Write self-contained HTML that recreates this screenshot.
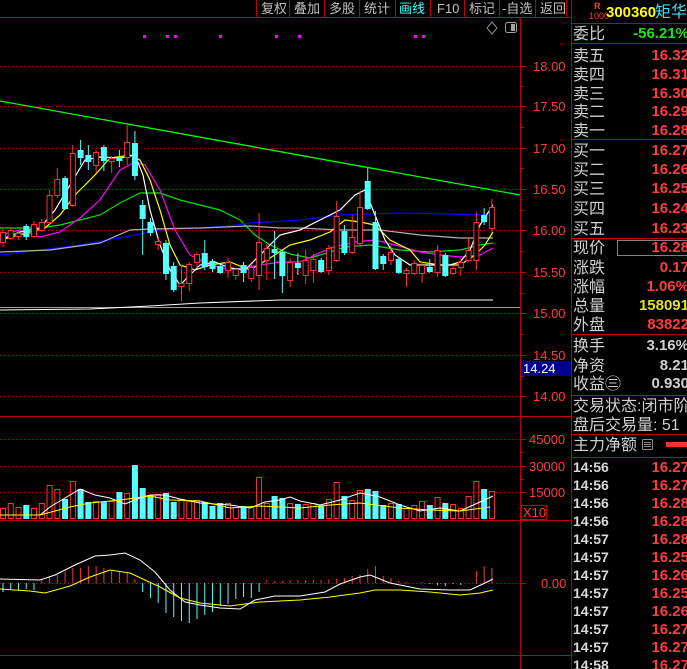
<!DOCTYPE html>
<html><head><meta charset="utf-8">
<style>
html,body{margin:0;padding:0;background:#000;width:687px;height:669px;overflow:hidden}
svg{display:block}
text{font-family:"Liberation Sans","Noto Sans CJK SC",sans-serif}
.lb{fill:#d0d0d0;font-size:16px}
.rv{fill:#ff3c3c;font-size:15px;font-weight:bold;text-anchor:end}
.ax{fill:#ff3c3c;font-size:13px}
.tb{fill:#c0c0c0;font-size:13px}
.tm{fill:#d8d8d8;font-size:14px;font-weight:bold}
</style></head><body>
<svg id="s" width="687" height="669" viewBox="0 0 687 669" xmlns="http://www.w3.org/2000/svg">
<rect width="687" height="669" fill="#000"/>
<g id="grid" stroke="#c00000" stroke-width="1" stroke-dasharray="1,3"></g>
<line x1="0" y1="17.5" x2="571" y2="17.5" stroke="#c00000"/>
<g stroke="#c00000">
<line x1="256.5" y1="0" x2="256.5" y2="17"/><line x1="289.5" y1="0" x2="289.5" y2="17"/><line x1="324.5" y1="0" x2="324.5" y2="17"/><line x1="359.5" y1="0" x2="359.5" y2="17"/><line x1="395.5" y1="0" x2="395.5" y2="17"/><line x1="430.5" y1="0" x2="430.5" y2="17"/><line x1="464.5" y1="0" x2="464.5" y2="17"/><line x1="499.5" y1="0" x2="499.5" y2="17"/><line x1="535.5" y1="0" x2="535.5" y2="17"/><line x1="566.5" y1="0" x2="566.5" y2="17"/>
</g>
<text class="tb" x="261" y="13">复权</text><text class="tb" x="294" y="13">叠加</text><text class="tb" x="329" y="13">多股</text><text class="tb" x="364" y="13">统计</text><text x="399" y="13" style="fill:#40ffff;font-size:13px">画线</text><text class="tb" x="437" y="13">F10</text><text class="tb" x="469" y="13">标记</text><text class="tb" x="502" y="13">-自选</text><text class="tb" x="540" y="13">返回</text>
<path d="M492 22 L497 28 L492 34 L487 28 Z" fill="none" stroke="#909090"/>
<rect x="505.5" y="22.5" width="11" height="10" rx="2" fill="none" stroke="#a0a0a0"/><rect x="511" y="24" width="4" height="7" fill="#a0a0a0"/>
<g fill="#ff00ff"><rect x="143" y="35" width="3" height="3"/><rect x="166" y="35" width="3" height="3"/><rect x="174" y="35" width="3" height="3"/><rect x="219" y="35" width="3" height="3"/><rect x="275" y="35" width="3" height="3"/><rect x="298" y="35" width="3" height="3"/><rect x="414" y="35" width="3" height="3"/><rect x="422" y="35" width="3" height="3"/></g>
<line x1="520.5" y1="17" x2="520.5" y2="669" stroke="#c00000"/>
<line x1="571.5" y1="0" x2="571.5" y2="669" stroke="#c00000"/>
<line x1="0" y1="416.5" x2="571" y2="416.5" stroke="#c00000"/>
<line x1="0" y1="520.5" x2="571" y2="520.5" stroke="#c00000"/>
<line x1="0" y1="655.5" x2="571" y2="655.5" stroke="#c00000"/>
<g id="ticks" stroke="#c00000"></g>
<text class="ax" x="533" y="71">18.00</text><text class="ax" x="533" y="111">17.50</text><text class="ax" x="533" y="153">17.00</text><text class="ax" x="533" y="194">16.50</text><text class="ax" x="533" y="235">16.00</text><text class="ax" x="533" y="277">15.50</text><text class="ax" x="533" y="318">15.00</text><text class="ax" x="533" y="360">14.50</text><text class="ax" x="533" y="401">14.00</text>
<rect x="521" y="361" width="50" height="15" fill="#000090"/><text x="523" y="373" style="fill:#fff;font-size:13px">14.24</text>
<text class="ax" x="529" y="444">45000</text><text class="ax" x="529" y="471">30000</text><text class="ax" x="529" y="497">15000</text>
<rect x="521.5" y="505.5" width="25" height="14" fill="none" stroke="#c00000"/><text class="ax" x="523" y="517">X10</text>
<text class="ax" x="541" y="588">0.00</text>
<line x1="0" y1="101" x2="520" y2="195" stroke="#00ff00" stroke-width="1.3"/>
<line x1="0" y1="307.5" x2="520" y2="307.5" stroke="#a0a0a0"/>
<polyline fill="none" stroke="#fff" points="0,310 90,309 150,306 200,303 280,300 360,300 493,300"/>
<g id="ma" fill="none" stroke-width="1.2"></g>
<g id="cd"></g>
<g id="vol"></g>
<g id="macd"></g>
<g stroke="#c00000"><line x1="572" y1="23.5" x2="687" y2="23.5"/><line x1="572" y1="43.5" x2="687" y2="43.5"/><line x1="572" y1="139.5" x2="687" y2="139.5"/><line x1="572" y1="238.5" x2="687" y2="238.5"/><line x1="572" y1="334.5" x2="687" y2="334.5"/><line x1="572" y1="395.5" x2="687" y2="395.5"/><line x1="572" y1="434.5" x2="687" y2="434.5"/><line x1="572" y1="457.5" x2="687" y2="457.5"/></g>
<text x="594" y="9" style="fill:#ff3c3c;font-size:9px;font-weight:bold">R</text><text x="589" y="19" style="fill:#ff3c3c;font-size:9px">1000</text>
<text x="606" y="17" style="fill:#ffff00;font-size:15px;font-weight:bold">300360</text><text x="655" y="17" style="fill:#40e0ff;font-size:16px">矩华</text>
<text class="lb" x="573" y="39">委比</text><text class="rv" x="689" y="38" style="fill:#20e020">-56.21%</text>
<text class="lb" x="573" y="61">卖五</text><text class="rv" x="689" y="60">16.32</text>
<text class="lb" x="573" y="80">卖四</text><text class="rv" x="689" y="79">16.31</text>
<text class="lb" x="573" y="99">卖三</text><text class="rv" x="689" y="98">16.30</text>
<text class="lb" x="573" y="117">卖二</text><text class="rv" x="689" y="116">16.29</text>
<text class="lb" x="573" y="136">卖一</text><text class="rv" x="689" y="135">16.28</text>
<text class="lb" x="573" y="156">买一</text><text class="rv" x="689" y="155">16.27</text>
<text class="lb" x="573" y="175">买二</text><text class="rv" x="689" y="174">16.26</text>
<text class="lb" x="573" y="194">买三</text><text class="rv" x="689" y="193">16.25</text>
<text class="lb" x="573" y="214">买四</text><text class="rv" x="689" y="213">16.24</text>
<text class="lb" x="573" y="234">买五</text><text class="rv" x="689" y="233">16.23</text>
<rect x="617.5" y="240.5" width="72" height="15" fill="none" stroke="#808080"/>
<text class="lb" x="573" y="253">现价</text><text class="rv" x="689" y="252">16.28</text>
<text class="lb" x="573" y="273">涨跌</text><text class="rv" x="689" y="272">0.17</text>
<text class="lb" x="573" y="292">涨幅</text><text class="rv" x="689" y="291">1.06%</text>
<text class="lb" x="573" y="311">总量</text><text class="rv" x="689" y="310" style="fill:#e0e020">158091</text>
<text class="lb" x="573" y="330">外盘</text><text class="rv" x="689" y="329">83822</text>
<text class="lb" x="573" y="351">换手</text><text class="rv" x="689" y="350" style="fill:#d0d0d0">3.16%</text>
<text class="lb" x="573" y="371">净资</text><text class="rv" x="689" y="370" style="fill:#d0d0d0">8.21</text>
<text class="lb" x="573" y="389">收益㊂</text><text class="rv" x="689" y="388" style="fill:#d0d0d0">0.930</text>
<text class="lb" x="573" y="411">交易状态:闭市阶</text>
<text class="lb" x="573" y="430">盘后交易量: 51 </text>
<text class="lb" x="573" y="450">主力净额</text>
<rect x="642.5" y="439.5" width="10" height="10" rx="1" fill="none" stroke="#909090"/><g stroke="#909090"><line x1="644" y1="442.5" x2="651" y2="442.5"/><line x1="644" y1="444.5" x2="651" y2="444.5"/><line x1="644" y1="446.5" x2="651" y2="446.5"/></g>
<rect x="666" y="442" width="21" height="5" fill="#ff3030"/>
<g id="tl"></g>
</svg>
<script>
var NS="http://www.w3.org/2000/svg";
function el(p,t,a){var e=document.createElementNS(NS,t);for(var k in a)e.setAttribute(k,a[k]);p.appendChild(e);return e;}
var g=document.getElementById('grid');
[66,106,148,189,230,272,313,355,396,439,466,492].forEach(function(y){el(g,'line',{x1:0,y1:y+.5,x2:520,y2:y+.5});});
el(g,'line',{x1:0,y1:583.5,x2:520,y2:583.5});
var tk=document.getElementById('ticks');
[66,106,148,189,230,272,313,355,396,439,466,492,583].forEach(function(y){el(tk,'line',{x1:520,y1:y+.5,x2:526,y2:y+.5});});
[86,127,168,210,251,293,334,376,452,479].forEach(function(y){el(tk,'line',{x1:520,y1:y+.5,x2:524,y2:y+.5});});
function pl(pts,c){el(document.getElementById('ma'),'polyline',{points:pts,stroke:c});}
pl("0,228 40,228 60,225 80,220 100,215 120,203 140,193 160,193 180,200 200,205 220,210 240,220 255,235 270,245 290,254 310,258 330,252 345,247 370,245 400,250 430,252 460,250 480,245 493,243","#00e000");
pl("0,255 40,250 80,245 120,238 145,233 160,230 200,228 230,226 250,223 270,222 300,220 340,215 400,213 450,214 493,215","#0000ff");
pl("0,252 50,250 100,243 130,230 150,229 200,228 250,226 280,228 300,228 340,230 380,230 420,235 460,238 493,238","#b0b0b0");
pl("0,235 20,230 40,237 60,232 80,218 100,200 120,170 135,162 145,165 160,190 175,230 190,255 210,265 230,270 260,265 280,262 300,262 330,248 355,242 375,240 395,245 420,252 440,255 460,257 480,255 493,248","#ff00ff");
pl("0,240 30,232 45,228 60,215 75,195 95,175 110,158 130,155 140,160 150,180 160,210 170,245 180,265 195,270 210,265 230,262 250,270 270,258 290,245 310,240 330,232 345,220 360,222 375,225 390,240 410,250 420,262 440,265 460,265 475,255 485,245 493,232","#ffff00");
pl("0,240 20,232 40,228 55,210 70,185 85,160 100,157 120,158 135,155 143,175 150,210 160,245 170,270 180,285 190,275 200,265 215,262 230,268 245,270 260,255 280,235 300,230 320,220 340,210 355,195 365,190 375,215 385,240 395,255 410,265 430,265 450,265 460,262 470,250 480,225 493,205","#ffffff");
var C=[[242,232,229,247],[238,230,228,240],[236,233,231,240],[226,236,224,240],[236,224,221,238],[230,222,219,232],[222,195,190,224],[195,179,168,198],[178,208,176,210],[205,153,145,207],[150,157,140,165],[155,161,145,170],[165,152,150,173],[147,160,145,171],[161,158,156,173],[157,160,150,167],[157,142,125,165],[143,175,131,180],[205,218,200,255],[222,232,218,236],[244,241,238,250],[243,273,240,280],[266,289,262,292],[286,283,265,301],[283,264,262,291],[262,254,252,268],[253,266,240,270],[261,268,259,272],[266,272,264,274],[270,262,258,278],[275,269,268,280],[265,272,262,282],[278,267,264,282],[275,242,213,290],[260,248,243,280],[249,252,231,279],[252,275,250,293],[280,262,258,287],[263,267,253,275],[275,260,249,284],[270,259,254,283],[260,271,258,273],[270,248,245,275],[260,216,201,262],[231,252,225,255],[252,237,215,254],[243,207,191,245],[181,208,168,210],[222,268,211,270],[256,263,254,270],[260,252,245,265],[259,272,257,274],[273,270,268,287],[273,263,260,275],[273,265,262,283],[267,271,259,273],[272,250,245,277],[255,275,253,277],[273,268,266,275],[267,262,258,276],[260,250,237,262],[260,222,212,270],[215,221,208,225],[228,207,199,233]];
var cd=document.getElementById('cd');
var V=[508,503,507,505,508,503,485,489,499,481,489,502,501,502,501,492,493,465,488,495,494,493,502,499,501,500,502,506,503,503,507,506,507,477,503,496,498,503,504,504,503,506,499,482,496,500,490,489,491,505,503,504,508,505,501,505,497,503,504,508,496,481,489,491];
var vg=document.getElementById('vol');
var M=[592,590,590,589,590,580,576,575,572,568,568,566,566,568,571,572,573,579,592,598,603,613,617,621,623,619,615,612,606,604,599,597,598,592,580,581,581,580,580,580,580,580,579,579,578,576,575,569,566,576,578,581,582,583,582,584,585,586,584,585,583,571,566,568];
var mg=document.getElementById('macd');
C.forEach(function(c,i){
 var x=3+i*7.76, up=c[1]<c[0], col=up?'#ff3333':'#54ffff';
 var top=Math.min(c[0],c[1]), h=Math.max(1,Math.abs(c[0]-c[1]));
 el(cd,'line',{x1:x,y1:c[2],x2:x,y2:c[3],stroke:col});
 if(up) el(cd,'rect',{x:x-2.5,y:top+.5,width:5,height:h,fill:'#000',stroke:col});
 else el(cd,'rect',{x:x-3,y:top,width:6,height:h+1,fill:col});
 var vt=V[i];
 if(up) el(vg,'rect',{x:x-2.5,y:vt+.5,width:5,height:518-vt,fill:'none',stroke:col});
 else el(vg,'rect',{x:x-3,y:vt,width:6,height:519-vt,fill:col});
 var m=M[i], mc=m<583?'#ff3333':'#54ffff';
 el(mg,'line',{x1:x,y1:583,x2:x,y2:m,stroke:mc});
});
el(vg,'polyline',{fill:'none',stroke:'#fff',points:"0,515 40,515 50,507 65,498 80,489 95,495 110,498 125,504 140,498 150,495 165,495 180,499 200,503 230,505 250,508 265,502 280,500 290,497 300,501 320,505 340,500 360,493 380,497 400,505 420,511 440,508 460,511 480,502 493,496"});
el(vg,'polyline',{fill:'none',stroke:'#ffff00',points:"0,515 40,515 70,507 90,503 120,500 150,496 170,500 200,501 230,508 260,506 300,508 330,505 360,503 400,508 430,510 460,511 490,507"});
el(mg,'polyline',{fill:'none',stroke:'#fff',points:"0,579 40,580 55,575 75,565 95,556 110,555 125,553 140,560 155,572 170,590 185,602 200,605 220,608 240,609 255,600 275,596 300,596 325,592 340,584 360,577 370,575 390,583 420,589 450,590 470,590 485,583 493,579"});
el(mg,'polyline',{fill:'none',stroke:'#ffff00',points:"0,589 30,591 45,593 70,586 90,577 110,570 130,573 160,587 180,598 200,603 230,606 260,602 300,600 330,597 360,593 375,590 400,590 430,592 460,595 480,593 493,590"});
var T=[["14:56","16.27"],["14:56","16.27"],["14:56","16.28"],["14:56","16.28"],["14:57","16.28"],["14:57","16.25"],["14:57","16.26"],["14:57","16.25"],["14:57","16.26"],["14:57","16.27"],["14:57","16.27"],["14:58","16.27"]];
var tl=document.getElementById('tl');
T.forEach(function(t,i){var y=472+i*18;
 var a=el(tl,'text',{x:573,y:y,'class':'tm'});a.textContent=t[0];
 var b=el(tl,'text',{x:689,y:y,'class':'rv'});b.textContent=t[1];});
</script>
</body></html>
